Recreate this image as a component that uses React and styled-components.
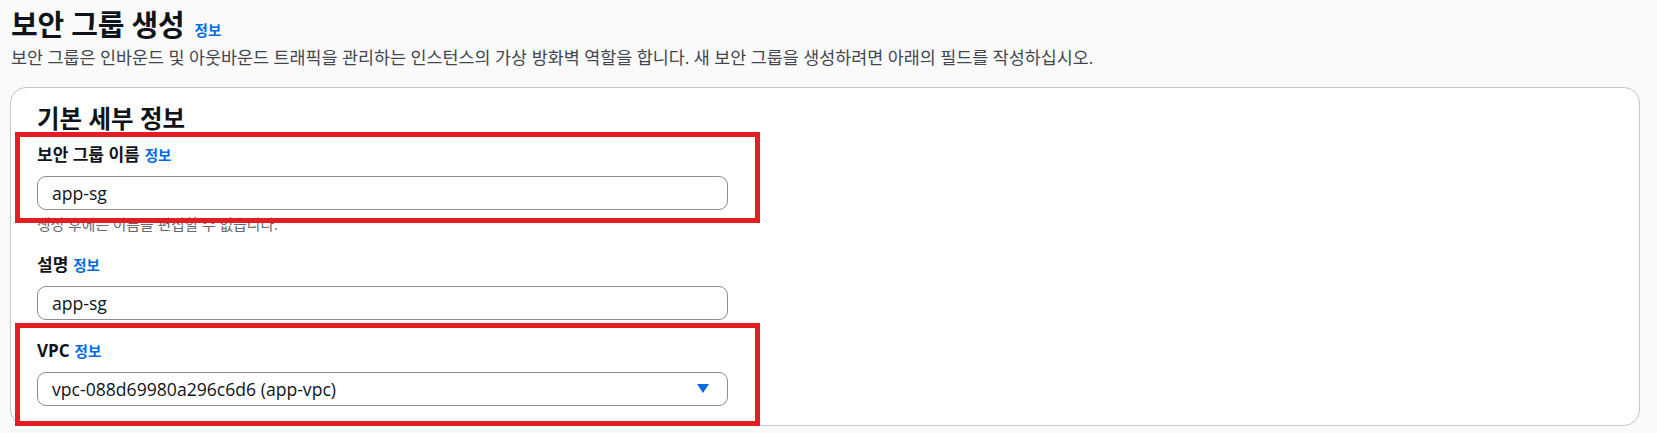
import React from "react";
import styled, { createGlobalStyle } from "styled-components";

const GlobalStyle = createGlobalStyle`
  html, body {
    margin: 0;
    padding: 0;
    background: #fafafa;
  }
  body {
    font-family: "Open Sans", "Noto Sans CJK KR", sans-serif;
    color: #0f141a;
  }
`;

const Page = styled.div`
  padding: 8px 17px 7px 10px;
  box-sizing: border-box;
`;

const Header = styled.header`
  padding-left: 1px;
  margin-bottom: 19px;
`;

const TitleRow = styled.div`
  display: flex;
  align-items: baseline;
  gap: 10px;
`;

const Title = styled.h1`
  margin: 0;
  font-size: 29px;
  line-height: 34px;
  font-weight: 700;
  letter-spacing: -0.2px;
`;

const Info = styled.a`
  color: #006ce0;
  font-weight: 700;
  font-size: ${props => props.size || 14.5}px;
  text-decoration: none;
  cursor: pointer;
`;

const Description = styled.p`
  margin: 4px 0 0;
  font-size: 17.4px;
  line-height: 22px;
  color: #424650;
`;

const Card = styled.section`
  position: relative;
  background: #ffffff;
  border: 1px solid #c6c6cd;
  border-radius: 16px;
  padding: 16px 26px 20px 26px;
  height: 339px;
  box-sizing: border-box;
`;

const CardTitle = styled.h2`
  margin: 0 0 10px;
  font-size: 24.5px;
  line-height: 30px;
  font-weight: 700;
`;

const Field = styled.div`
  position: relative;
  width: 691px;
  margin-top: ${props => props.top || 0}px;
`;

const Label = styled.label`
  display: flex;
  align-items: baseline;
  gap: 5px;
  font-size: 17px;
  line-height: 22px;
  font-weight: 700;
  margin-bottom: 9px;
`;

const Control = styled.div`
  width: 691px;
  height: 34px;
  box-sizing: border-box;
  border: 1px solid #8c8c94;
  border-radius: 9px;
  background: #ffffff;
  display: flex;
  align-items: center;
  justify-content: space-between;
  padding: 0 18px 0 14px;
  font-size: 17.6px;
  color: #0f141a;
`;

const Hint = styled.div`
  margin-top: 5px;
  font-size: 14.8px;
  line-height: 19px;
  color: #656871;
`;

const Highlight = styled.div`
  position: absolute;
  top: ${props => props.top}px;
  bottom: ${props => props.bottom}px;
  left: -22px;
  right: -32px;
  border: 5px solid #e41d23;
  pointer-events: none;
`;

const Caret = () => (
  <svg width="12" height="10" viewBox="0 0 12 10">
    <path d="M0 0 H12 L6 9 Z" fill="#006ce0" />
  </svg>
);

const App = () => {
  return (
    <Page>
      <GlobalStyle />
      <Header>
        <TitleRow>
          <Title>보안 그룹 생성</Title>
          <Info>정보</Info>
        </TitleRow>
        <Description>
          보안 그룹은 인바운드 및 아웃바운드 트래픽을 관리하는 인스턴스의 가상 방화벽 역할을 합니다. 새 보안 그룹을 생성하려면 아래의 필드를 작성하십시오.
        </Description>
      </Header>
      <Card>
        <CardTitle>기본 세부 정보</CardTitle>
        <Field>
          <Label>보안 그룹 이름 <Info>정보</Info></Label>
          <Control>app-sg</Control>
          <Hint>생성 후에는 이름을 편집할 수 없습니다.</Hint>
          <Highlight top={-12} bottom={11} />
        </Field>
        <Field top={20}>
          <Label>설명 <Info>정보</Info></Label>
          <Control>app-sg</Control>
        </Field>
        <Field top={20}>
          <Label>VPC <Info>정보</Info></Label>
          <Control>
            <span>vpc-088d69980a296c6d6 (app-vpc)</span>
            <Caret />
          </Control>
          <Highlight top={-17} bottom={-20} />
        </Field>
      </Card>
    </Page>
  );
};

export default App;
